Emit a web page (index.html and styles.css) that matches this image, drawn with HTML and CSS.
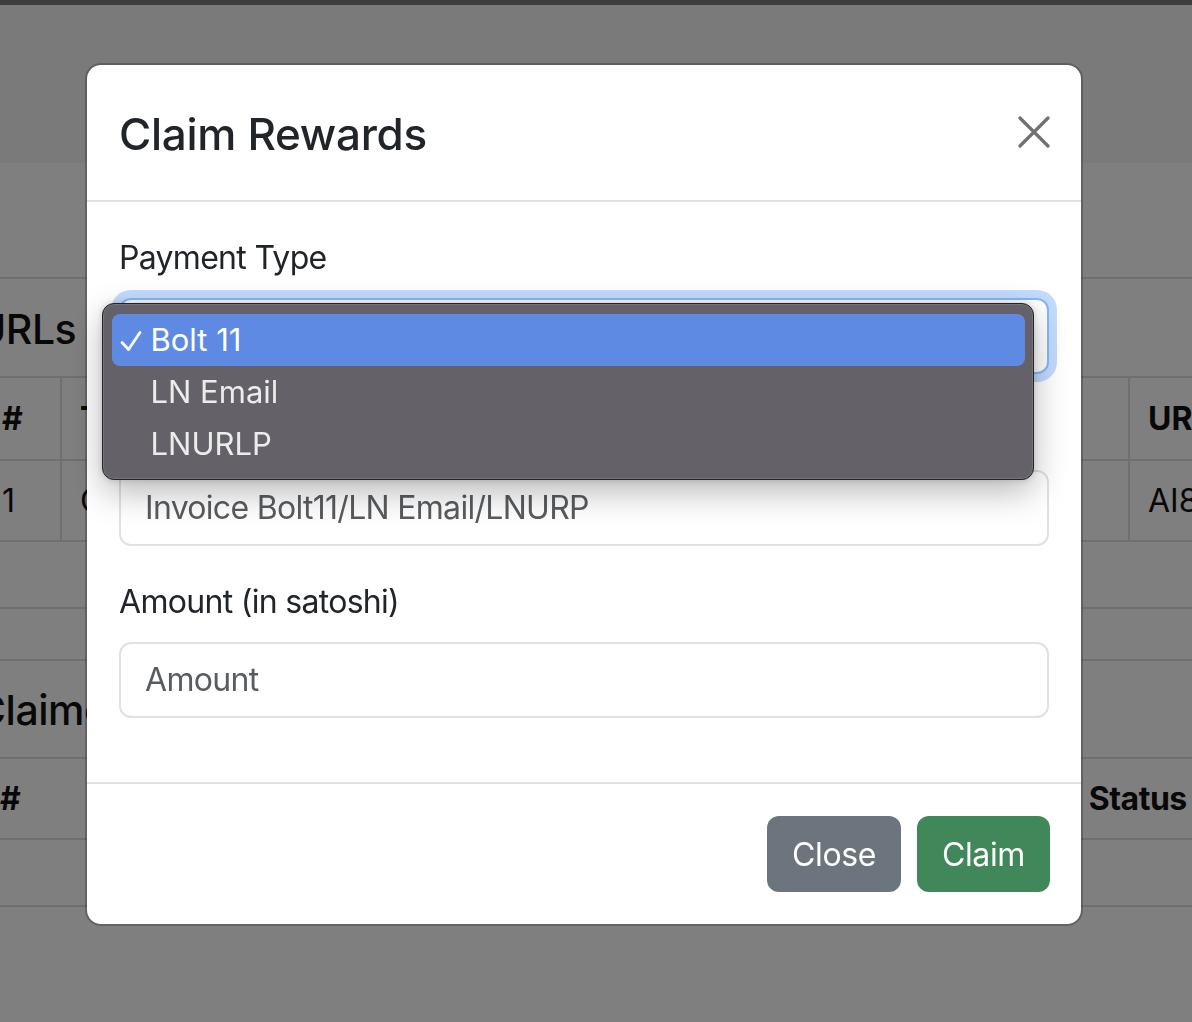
FILE: index.html
```html
<!DOCTYPE html>
<html lang="en">
<head>
<meta charset="utf-8">
<title>Claim Rewards</title>
<link rel="stylesheet" href="styles.css">
</head>
<body>
<div class="page">
  <div class="topbar"></div>
  <div class="hero"></div>
  <div class="spacer"></div>
  <div class="sec-head"><h3 class="sec-title">URLs</h3></div>
  <table class="tbl tbl-bordered">
    <colgroup><col class="c1"><col class="c2"><col class="c3"><col class="c4"></colgroup>
    <thead><tr><th>#</th><th>Type</th><th>Created</th><th>URL</th></tr></thead>
    <tbody><tr><td>1</td><td>Claim</td><td>2024</td><td>AI8f2kq9</td></tr></tbody>
  </table>
  <div class="rule-a"></div>
  <div class="rule-b"></div>
  <div class="sec-head sec-head-2"><h3 class="sec-title">Claimed</h3></div>
  <div class="tbl2">
    <div class="tbl2-head"><span class="t2-num">#</span><span class="t2-status">Status</span></div>
    <div class="tbl2-row"></div>
  </div>
</div>

<div class="backdrop"></div>

<div class="modal-wrap">
  <div class="modal-dialog">
    <div class="modal-content">
      <div class="modal-header">
        <h5 class="modal-title">Claim Rewards</h5>
        <button class="btn-close" type="button" aria-label="Close">
          <svg width="32" height="32" viewBox="0 0 32 32"><path d="M2 2 L30 30 M30 2 L2 30" stroke="#707070" stroke-width="3.2" stroke-linecap="round" fill="none"/></svg>
        </button>
      </div>
      <div class="modal-body">
        <div class="group">
          <label class="form-label">Payment Type</label>
          <div class="select-wrap">
            <div class="form-select">Bolt 11</div>
            <div class="popup">
              <div class="popup-item active"><svg class="check" width="22" height="22" viewBox="0 0 22 22"><path d="M2 12.5 L8.5 19.5 L20 2.5" stroke="#ffffff" stroke-width="2.8" stroke-linecap="round" stroke-linejoin="round" fill="none"/></svg>Bolt 11</div>
              <div class="popup-item">LN Email</div>
              <div class="popup-item">LNURLP</div>
            </div>
          </div>
        </div>
        <div class="group">
          <label class="form-label">Invoice</label>
          <div class="form-control placeholder">Invoice Bolt11/LN Email/LNURP</div>
        </div>
        <div class="group">
          <label class="form-label">Amount (in satoshi)</label>
          <div class="form-control placeholder">Amount</div>
        </div>
      </div>
      <div class="modal-footer">
        <button class="btn btn-secondary" type="button">Close</button>
        <button class="btn btn-success" type="button">Claim</button>
      </div>
    </div>
  </div>
</div>
</body>
</html>
```

FILE: styles.css
```css
* { box-sizing: border-box; }
html, body { margin: 0; padding: 0; }
body {
  width: 1192px;
  height: 1022px;
  overflow: hidden;
  background: #fff;
  font-family: Inter, "Liberation Sans", sans-serif;
  color: #212529;
}

/* background page */
.page { margin-left: -18px; width: 1400px; }
.topbar { height: 5px; background: #7a7a7a; margin-left: 18px; }
.hero { height: 158px; background: #f4f4f4; }
.spacer { height: 116px; border-bottom: 2px solid #dedede; }
.sec-head {
  height: 99px;
  display: flex;
  align-items: center;
  border-bottom: 2px solid #dedede;
}
.sec-title {
  margin: 0;
  font-size: 41px;
  font-weight: 500;
  color: #111;
  position: relative;
  left: -6px;
  top: 1px;
  letter-spacing: -0.5px;
}
.tbl { border-collapse: collapse; table-layout: fixed; width: 1400px; }
.tbl .c1 { width: 78px; }
.tbl .c2 { width: 500px; }
.tbl .c3 { width: 568px; }
.tbl .c4 { width: 254px; }
.tbl th, .tbl td {
  text-align: left;
  font-size: 32px;
  color: #111;
  padding: 0 18px;
  white-space: nowrap;
  overflow: hidden;
}
.tbl th { height: 82px; font-weight: 700; }
.tbl td { height: 81px; font-weight: 400; }
.tbl-bordered th, .tbl-bordered td { border: 2px solid #dedede; border-top: 0; }
.rule-a { height: 67px; border-bottom: 2px solid #dedede; }
.rule-b { height: 52px; border-bottom: 2px solid #dedede; }
.sec-head-2 { height: 98px; }
.tbl2-head {
  height: 81px;
  border-bottom: 2px solid #dedede;
  display: flex;
  align-items: center;
  font-size: 32px;
  font-weight: 700;
  color: #111;
}
.t2-num { margin-left: 18px; }
.t2-status { margin-left: 1068px; letter-spacing: -0.5px; }
.tbl2-row { height: 67px; border-bottom: 2px solid #dedede; }

.backdrop {
  position: fixed;
  inset: 0;
  background: rgba(0, 0, 0, 0.5);
}

/* modal */
.modal-wrap { position: fixed; inset: 0; }
.modal-dialog { margin: 63px 0 0 85px; width: 998px; }
.modal-content {
  background: #fff;
  background-clip: padding-box;
  border: 2px solid rgba(0, 0, 0, 0.22);
  border-radius: 16px;
}
.modal-header {
  height: 137px;
  display: flex;
  align-items: center;
  justify-content: space-between;
  padding: 0 32px;
  border-bottom: 2px solid #dee2e6;
}
.modal-title {
  margin: 0;
  font-size: 44px;
  line-height: 52px;
  font-weight: 500;
  color: #212529;
  letter-spacing: -0.3px;
  position: relative;
  top: 1px;
}
.btn-close {
  border: 0;
  background: transparent;
  padding: 0;
  width: 32px;
  height: 32px;
  display: flex;
  position: relative;
  top: -1px;
  left: 1px;
}
.modal-body { padding: 32px 32px; }
.group { margin-bottom: 32px; }
.form-label {
  display: block;
  font-size: 32px;
  line-height: 48px;
  margin-bottom: 16px;
  color: #212529;
  letter-spacing: -0.7px;
}
.form-control, .form-select {
  height: 76px;
  border: 2px solid #dee2e6;
  border-radius: 12px;
  padding: 12px 24px;
  font-size: 32px;
  line-height: 48px;
  color: #212529;
  background: #fff;
  letter-spacing: -0.7px;
}
.placeholder { color: #595c5f; }
.select-wrap { position: relative; }
.form-select {
  border-color: #86b7fe;
  box-shadow: 0 0 0 8px rgba(13, 110, 253, 0.25);
}
.popup {
  position: absolute;
  left: -17px;
  top: 5px;
  width: 932px;
  height: 177px;
  background: #646268;
  border: 1.5px solid #232323;
  border-radius: 12px;
  padding: 9.5px 8.5px;
  box-shadow: inset 0 0 0 1px rgba(255,255,255,0.12), 0 12px 34px rgba(0, 0, 0, 0.28), 0 0 6px rgba(0,0,0,0.15);
}
.popup-item {
  height: 52px;
  display: flex;
  align-items: center;
  padding-left: 39px;
  font-size: 31px;
  color: #ececec;
  border-radius: 8px;
  position: relative;
}
.popup-item.active { background: #5f8ae3; color: #fff; }
.check {
  position: absolute;
  left: 8px;
  top: 16px;
}

.modal-footer {
  display: flex;
  justify-content: flex-end;
  gap: 16px;
  padding: 32px 31px 32px;
  border-top: 2px solid #dee2e6;
}
.btn {
  height: 76px;
  border: 0;
  border-radius: 12px;
  padding: 0;
  font-family: Inter, "Liberation Sans", sans-serif;
  font-size: 32px;
  letter-spacing: -0.4px;
  color: #fff;
}
.btn-secondary { background: #6c757d; width: 134px; }
.btn-success { background: #408759; width: 133px; }
```
